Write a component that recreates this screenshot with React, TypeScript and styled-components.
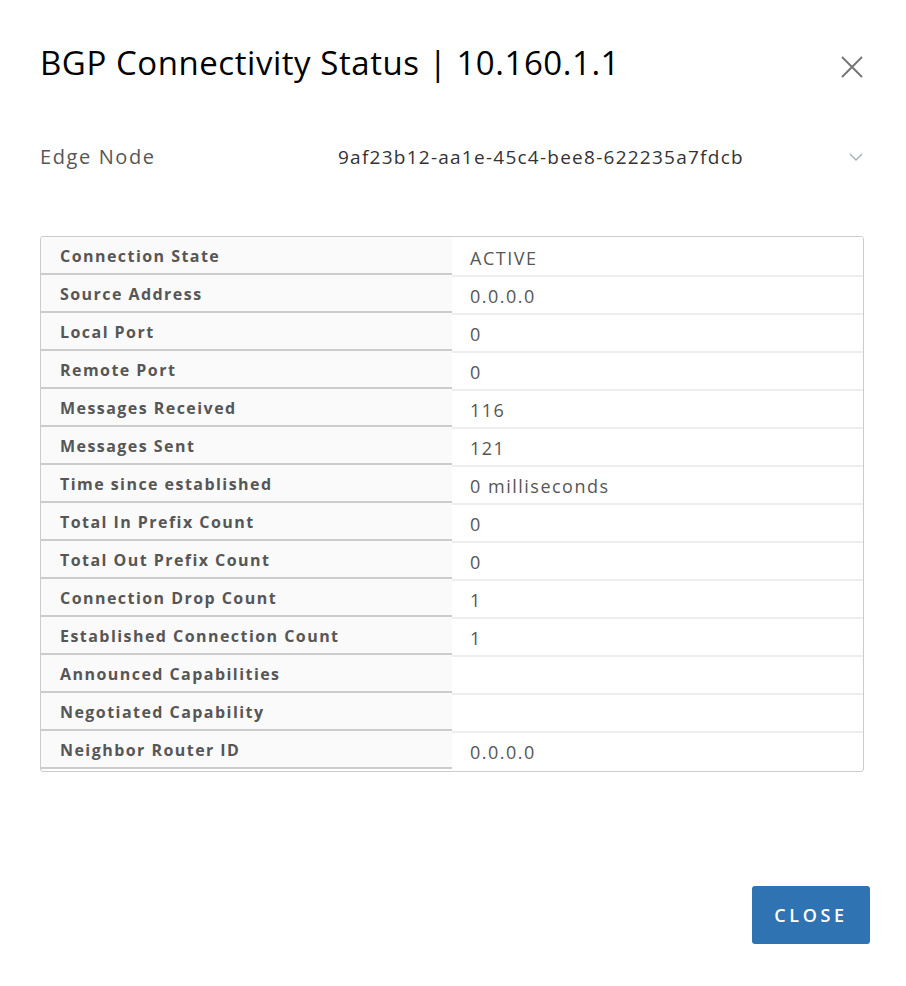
import React from "react";
import styled, { createGlobalStyle } from "styled-components";

const GlobalStyle = createGlobalStyle`
  html, body {
    margin: 0;
    padding: 0;
    background: #fff;
  }
  body {
    font-family: "Open Sans", "Liberation Sans", sans-serif;
    color: #565656;
  }
`;

const Modal = styled.div`
  width: 906px;
  height: 986px;
  box-sizing: border-box;
  padding: 40px 36px 42px 40px;
  display: flex;
  flex-direction: column;
`;

const Header = styled.div`
  display: flex;
  justify-content: space-between;
  align-items: center;
  padding-right: 6px;
`;

const Title = styled.h1`
  margin: 0;
  font-size: 33px;
  font-weight: 400;
  color: #000;
  letter-spacing: 0.55px;
`;

const CloseIcon = styled.button`
  border: none;
  background: none;
  padding: 0;
  width: 24px;
  height: 24px;
  cursor: pointer;
  margin-top: 8px;
`;

const SelectRow = styled.div`
  display: flex;
  align-items: center;
  margin-top: 58px;
  padding-right: 6px;
`;

const SelectLabel = styled.div`
  width: 298px;
  font-size: 20px;
  letter-spacing: 1.6px;
  color: #565656;
`;

const SelectValue = styled.div`
  flex: 1;
  font-size: 19px;
  letter-spacing: 1.25px;
  color: #333;
`;

const Table = styled.div`
  margin-top: 66px;
  margin-right: 6px;
  padding-bottom: 2px;
  border: 1px solid #ccc;
  border-radius: 3px;
  overflow: hidden;
`;

const Row = styled.div`
  display: grid;
  grid-template-columns: 411px 1fr;
  height: 38px;
`;

const LabelCell = styled.div`
  background: #fafafa;
  border-bottom: 2px solid #ccc;
  box-sizing: border-box;
  padding: 8px 0 0 19px;
  font-size: 16px;
  font-weight: 700;
  color: #565656;
  letter-spacing: 1.45px;
`;

const ValueCell = styled.div<{ $divider?: boolean }>`
  background: #fff;
  border-top: 2px solid ${p => (p.$divider ? "#eee" : "#fff")};
  box-sizing: border-box;
  padding: 7px 0 0 18px;
  font-size: 18px;
  letter-spacing: 1.5px;
  color: #565656;
`;

const Footer = styled.div`
  margin-top: auto;
  display: flex;
  justify-content: flex-end;
`;

const PrimaryButton = styled.button`
  width: 118px;
  height: 58px;
  border: none;
  border-radius: 3px;
  background: #3073b3;
  color: #fff;
  font-family: "Open Sans", "Liberation Sans", sans-serif;
  font-size: 18px;
  font-weight: 600;
  letter-spacing: 3.6px;
  padding-left: 6px;
  cursor: pointer;
`;

const rows: [string, string][] = [
  ["Connection State", "ACTIVE"],
  ["Source Address", "0.0.0.0"],
  ["Local Port", "0"],
  ["Remote Port", "0"],
  ["Messages Received", "116"],
  ["Messages Sent", "121"],
  ["Time since established", "0 milliseconds"],
  ["Total In Prefix Count", "0"],
  ["Total Out Prefix Count", "0"],
  ["Connection Drop Count", "1"],
  ["Established Connection Count", "1"],
  ["Announced Capabilities", ""],
  ["Negotiated Capability", ""],
  ["Neighbor Router ID", "0.0.0.0"]
];

const App: React.FC = () => {
  return (
    <>
      <GlobalStyle />
      <Modal>
        <Header>
          <Title>BGP Connectivity Status | 10.160.1.1</Title>
          <CloseIcon aria-label="close">
            <svg width="24" height="24" viewBox="0 0 24 24">
              <path d="M2 2 L22 22 M22 2 L2 22" stroke="#777" strokeWidth="2" fill="none" />
            </svg>
          </CloseIcon>
        </Header>
        <SelectRow>
          <SelectLabel>Edge Node</SelectLabel>
          <SelectValue>9af23b12-aa1e-45c4-bee8-622235a7fdcb</SelectValue>
          <svg width="16" height="10" viewBox="0 0 16 10">
            <path d="M2 2 L8 8 L14 2" stroke="#a7b3bd" strokeWidth="1.5" fill="none" />
          </svg>
        </SelectRow>
        <Table>
          {rows.map(([label, value], i) => (
            <Row key={label}>
              <LabelCell>{label}</LabelCell>
              <ValueCell $divider={i > 0}>{value}</ValueCell>
            </Row>
          ))}
        </Table>
        <Footer>
          <PrimaryButton>CLOSE</PrimaryButton>
        </Footer>
      </Modal>
    </>
  );
};

export default App;
